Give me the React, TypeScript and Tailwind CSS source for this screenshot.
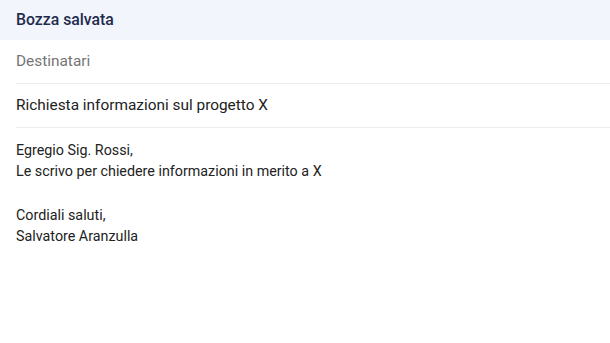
export default function App() {
  return (
    <div className="h-[343px] w-[610px] bg-white font-['Roboto',sans-serif] antialiased">
      <header className="flex h-[40px] items-center bg-[#f2f6fc] px-4">
        <h1 className="text-[15.8px] font-medium text-[#1f2b4d]">Bozza salvata</h1>
      </header>
      <div className="ml-4 flex h-[44px] items-center border-b border-[#ececec]">
        <span className="text-[15.4px] text-[#757575]">Destinatari</span>
      </div>
      <div className="ml-4 flex h-[44px] items-center border-b border-[#ececec]">
        <span className="text-[15.4px] text-[#222]">Richiesta informazioni sul progetto X</span>
      </div>
      <div className="px-4 pt-[12px] text-[14.3px] leading-[21px] text-[#222]">
        <p>Egregio Sig. Rossi,</p>
        <p>Le scrivo per chiedere informazioni in merito a X</p>
        <p className="h-[23px]" />
        <p>Cordiali saluti,</p>
        <p>Salvatore Aranzulla</p>
      </div>
    </div>
  )
}
